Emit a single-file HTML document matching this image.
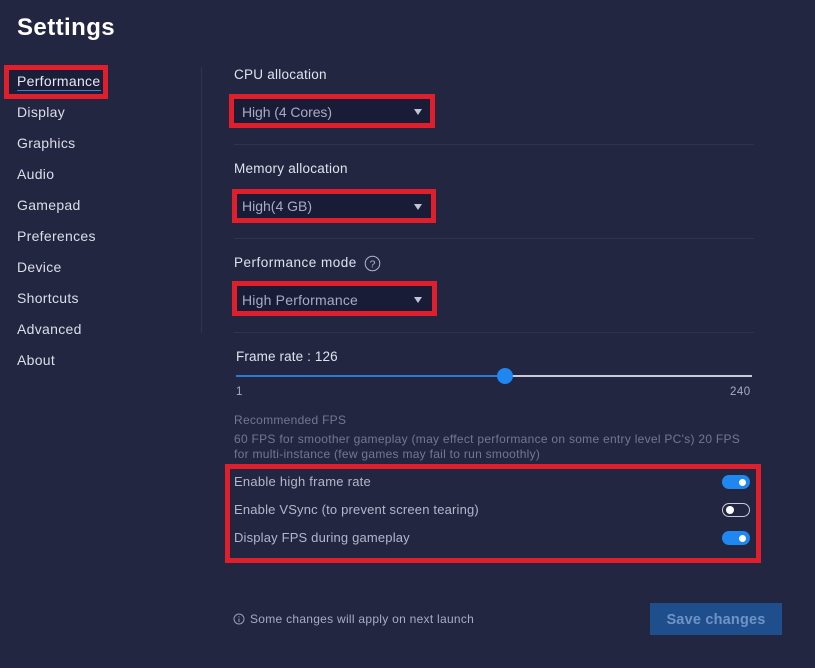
<!DOCTYPE html>
<html><head><meta charset="utf-8">
<style>
html,body{margin:0;padding:0;width:815px;height:668px;overflow:hidden;background:#222641;font-family:"Liberation Sans",sans-serif}
.t{position:absolute;white-space:nowrap;line-height:1}
.n{left:17px;font-size:14px;color:#dcdee8;letter-spacing:.3px}
.l{left:234px;font-size:13.5px;color:#e0e2ec;letter-spacing:.25px}
.r{position:absolute;border-style:solid;border-color:#e01f2d;box-sizing:border-box}
.s{position:absolute;background:#191c36;box-sizing:border-box;border:5px solid #e01f2d}
.s span{position:absolute;left:5px;top:4px;font-size:14px;line-height:16px;color:#a9abc3;white-space:nowrap}
.s i{position:absolute;top:10px;width:0;height:0;border-left:4.5px solid transparent;border-right:4.5px solid transparent;border-top:6px solid #c2c4d6}
.d{position:absolute;left:234px;width:520px;height:1px;background:#2e3350}
.o{font-size:13px;color:#b4b6ca;left:234px;letter-spacing:.25px}
.g{position:absolute;left:722px;width:28px;height:14px;border-radius:7px;background:#1f87ef}
.g b{position:absolute;left:17px;top:3.5px;width:7px;height:7px;border-radius:50%;background:#fff}
.g.off{background:transparent;border:1px solid #c8cad8;box-sizing:border-box}
.g.off b{left:2.5px;top:2px;width:8px;height:8px}
.h{font-size:12px;color:#74778f;left:234px;letter-spacing:.28px}
</style></head><body>
<div class="t" style="left:17px;top:16px;font-size:24px;font-weight:bold;color:#fff;letter-spacing:.42px">Settings</div>

<div class="r" style="left:4px;top:65px;width:104px;height:34px;border-width:5px;background:#1b1e38"></div>
<div class="t n" style="top:74px;color:#e6e8f2">Performance</div>
<div style="position:absolute;left:17px;top:90px;width:84px;height:1px;background:#3f7fd0"></div>
<div class="t n" style="top:105px">Display</div>
<div class="t n" style="top:136px">Graphics</div>
<div class="t n" style="top:167px">Audio</div>
<div class="t n" style="top:198px">Gamepad</div>
<div class="t n" style="top:229px">Preferences</div>
<div class="t n" style="top:260px">Device</div>
<div class="t n" style="top:291px">Shortcuts</div>
<div class="t n" style="top:322px">Advanced</div>
<div class="t n" style="top:353px">About</div>
<div style="position:absolute;left:201px;top:67px;width:1px;height:266px;background:#2e3350"></div>

<div class="t l" style="top:68px">CPU allocation</div>
<div class="s" style="left:229px;top:94px;width:206px;height:34px"><span style="left:8px;top:5px;letter-spacing:-.08px">High (4 Cores)</span><i style="left:179.5px"></i></div>
<div class="d" style="top:144px"></div>
<div class="t l" style="top:162px;letter-spacing:.25px">Memory allocation</div>
<div class="s" style="left:232px;top:189px;width:204px;height:34px"><span style="letter-spacing:0">High(4 GB)</span><i style="left:176.5px"></i></div>
<div class="d" style="top:238px"></div>
<div class="t l" style="top:256px;letter-spacing:.5px">Performance mode</div>
<svg style="position:absolute;left:364px;top:255px" width="17" height="17" viewBox="0 0 17 17"><circle cx="8.5" cy="8.5" r="7.3" fill="none" stroke="#b4b6ca" stroke-width="1"/><text x="8.5" y="12.3" font-size="10.5" text-anchor="middle" fill="#b4b6ca" font-family="Liberation Sans">?</text></svg>
<div class="s" style="left:232px;top:281px;width:205px;height:35px"><span style="top:6px;letter-spacing:.2px">High Performance</span><i style="left:176.5px;top:11px"></i></div>
<div class="d" style="top:332px"></div>

<div class="t l" style="left:236px;top:350px;letter-spacing:.12px">Frame rate : 126</div>
<div style="position:absolute;left:236px;top:375px;width:270px;height:2px;background:#2f78d6"></div>
<div style="position:absolute;left:506px;top:375px;width:246px;height:2px;background:#c8cad8"></div>
<div style="position:absolute;left:497px;top:368px;width:16px;height:16px;border-radius:50%;background:#1f87ef"></div>
<div class="t" style="left:236px;top:387px;font-size:11.5px;color:#a9abc0">1</div>
<div class="t" style="left:730px;top:387px;font-size:11.5px;color:#a9abc0;letter-spacing:.45px">240</div>

<div class="t h" style="top:414px">Recommended FPS</div>
<div class="t h" style="top:433px">60 FPS for smoother gameplay (may effect performance on some entry level PC's) 20 FPS</div>
<div class="t h" style="top:448px">for multi-instance (few games may fail to run smoothly)</div>

<div class="r" style="left:225px;top:464px;width:536px;height:99px;border-width:5px"></div>
<div class="t o" style="top:475px">Enable high frame rate</div>
<div class="t o" style="top:503px;letter-spacing:.18px">Enable VSync (to prevent screen tearing)</div>
<div class="t o" style="top:531px;letter-spacing:.17px">Display FPS during gameplay</div>
<div class="g" style="top:475px"><b></b></div>
<div class="g off" style="top:503px"><b></b></div>
<div class="g" style="top:531px"><b></b></div>

<svg style="position:absolute;left:233px;top:613px" width="13" height="13" viewBox="0 0 13 13"><circle cx="6" cy="6" r="5" fill="none" stroke="#9a9cb4" stroke-width="1"/><path d="M6 5.5V9M6 3.2V4.4" stroke="#9a9cb4" stroke-width="1" fill="none"/></svg>
<div class="t" style="left:250px;top:613px;font-size:12px;color:#a9abc2;letter-spacing:.28px">Some changes will apply on next launch</div>
<div style="position:absolute;left:650px;top:603px;width:132px;height:32px;background:#1f4e8c;color:#6f93c6;font-size:14.5px;font-weight:bold;line-height:35px;text-align:center;letter-spacing:.2px">Save changes</div>
</body></html>
